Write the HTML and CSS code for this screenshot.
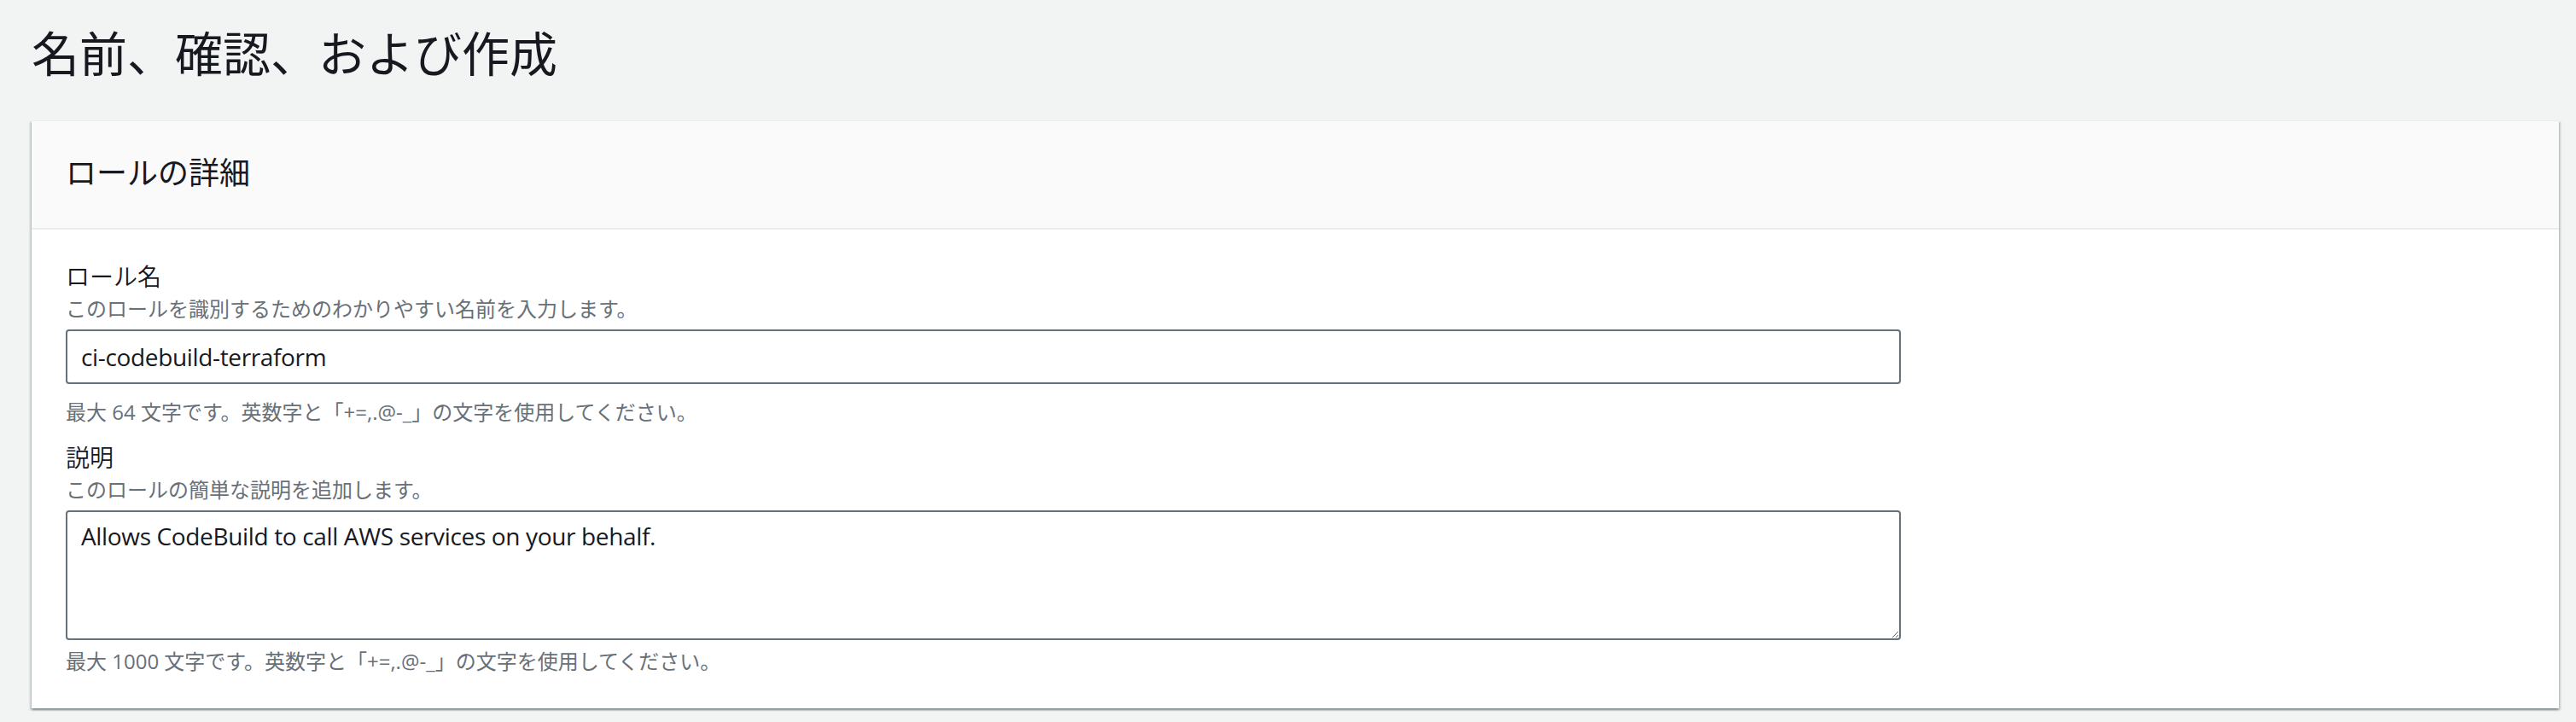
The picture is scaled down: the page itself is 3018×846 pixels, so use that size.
FILE: index.html
```html
<!DOCTYPE html>
<html lang="ja">
<head>
<meta charset="utf-8">
<title>名前、確認、および作成</title>
<link rel="stylesheet" href="styles.css">
</head>
<body>
<main class="page">
  <h1 class="page-title">名前、確認、および作成</h1>
  <section class="card">
    <header class="card-header">
      <h2 class="card-title">ロールの詳細</h2>
    </header>
    <div class="card-body">
      <div class="field">
        <label class="field-label" for="role-name">ロール名</label>
        <div class="field-desc">このロールを識別するためのわかりやすい名前を入力します。</div>
        <input class="text-input" id="role-name" type="text" value="ci-codebuild-terraform">
        <div class="field-hint hint-input">最大 64 文字です。英数字と「+=,.@-_」の文字を使用してください。</div>
      </div>
      <div class="field">
        <label class="field-label" for="role-desc">説明</label>
        <div class="field-desc">このロールの簡単な説明を追加します。</div>
        <textarea class="text-area" id="role-desc">Allows CodeBuild to call AWS services on your behalf.</textarea>
        <div class="field-hint hint-area">最大 1000 文字です。英数字と「+=,.@-_」の文字を使用してください。</div>
      </div>
    </div>
  </section>
</main>
</body>
</html>
```
FILE: styles.css
```css
* { box-sizing: border-box; }

html, body {
  margin: 0;
  padding: 0;
}

body {
  background: #f2f3f3;
  color: #16191f;
  font-family: "Open Sans", "Noto Sans CJK JP", sans-serif;
  width: 3018px;
  height: 846px;
  overflow: hidden;
}

.page {
  padding: 0 20px 0 37px;
}

.page-title {
  margin: 0;
  padding: 22px 0 39px 0;
  font-size: 56px;
  line-height: 80px;
  font-weight: 400;
  color: #16191f;
}

.card {
  background: #ffffff;
  border-top: 1px solid #eaeded;
  box-shadow: 0 2px 2px 0 rgba(0, 28, 36, 0.3),
              2px 2px 2px 0 rgba(0, 28, 36, 0.15),
              -2px 2px 2px 0 rgba(0, 28, 36, 0.15);
}

.card-header {
  background: #fafafa;
  border-bottom: 2px solid #eaeded;
  padding: 39px 40px 42px 40px;
}

.card-title {
  margin: 0;
  font-size: 36px;
  line-height: 44px;
  font-weight: 400;
  color: #16191f;
}

.card-body {
  padding: 35px 40px 39px 40px;
  display: flex;
  flex-direction: column;
  gap: 17px;
}

.field {
  display: flex;
  flex-direction: column;
  align-items: flex-start;
}

.field-label {
  font-size: 28px;
  line-height: 40px;
  font-weight: 350;
  color: #16191f;
}

.field-desc {
  font-size: 24px;
  line-height: 32px;
  color: #687078;
  margin-top: 2px;
}

.text-input,
.text-area {
  display: block;
  width: 2150px;
  margin: 8px 0 0 0;
  border: 2px solid #687078;
  border-radius: 4px;
  background: #ffffff;
  color: #16191f;
  font-family: "Open Sans", "Noto Sans CJK JP", sans-serif;
  font-size: 28px;
  letter-spacing: -0.35px;
  outline: none;
}

.text-input {
  height: 64px;
  padding: 0 16px;
  line-height: 40px;
}

.text-area {
  height: 152px;
  padding: 8px 16px;
  line-height: 40px;
  resize: vertical;
}

.field-hint {
  font-size: 24px;
  line-height: 32px;
  color: #687078;
}

.hint-input { margin-top: 17px; }
.hint-area { margin-top: 9px; }
```
